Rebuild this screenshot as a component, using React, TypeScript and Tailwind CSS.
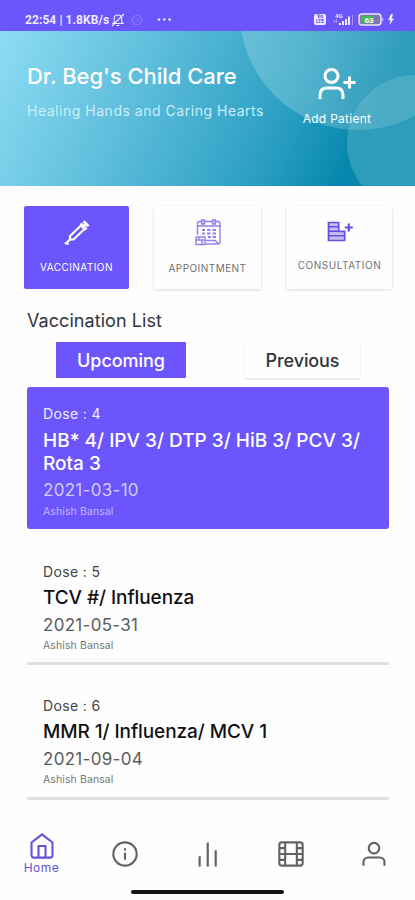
import type { ReactNode } from 'react';

const stats = [
  { label: 'VACCINATION', icon: <SyringeIcon />, card: 'w-[105px] bg-[#6c55fd] text-white rounded-xs', text: 'mt-[13px] tracking-[0.45px]' },
  { label: 'APPOINTMENT', icon: <CalendarIcon />, card: 'w-[107px] ml-[25px] text-[#707070] shadow-[0_1px_3px_rgba(0,0,0,0.14)]', text: 'mt-[14px] tracking-[0.45px]' },
  { label: 'CONSULTATION', icon: <ConsultIcon />, card: 'w-[105px] ml-[26px] text-[#707070] shadow-[0_1px_3px_rgba(0,0,0,0.14)]', text: 'mt-[11px] tracking-[0.55px]' },
];

const doses = [
  { num: 5, name: 'TCV #/ Influenza', date: '2021-05-31', doctor: 'Ashish Bansal', card: 'h-[136px] pt-[33px]' },
  { num: 6, name: 'MMR 1/ Influenza/ MCV 1', date: '2021-09-04', doctor: 'Ashish Bansal', card: 'h-[135px] pt-[31px]' },
];

function SyringeIcon() {
  return (
    <svg width="28" height="28" viewBox="0 0 28 28" fill="none" stroke="currentColor" strokeWidth="2.2">
      <path d="M2 26l5-4.500M3 24l2.500 2.500" />
      <path d="M7 18L18 7.500l3.500 3.500L10.500 21.500H7z" />
      <path d="M17.500 5.500l6 6M20.500 8.500l2.500-2.500M20.500 3.200l5 5" strokeWidth="2.800" />
    </svg>
  );
}

function CalendarIcon() {
  return (
    <svg width="28" height="28" viewBox="0 0 28 28" fill="none" stroke="#8f82ec" strokeWidth="1.400">
      <path d="M3.500 17V5.500q0-2 2-2H24q2 0 2 2V24q0 2-2 2H11M4 8h22" />
      <path d="M7.500 2h3v4h-3zM18.500 2h3v4h-3z" fill="#cbc5fa" />
      <path d="M8 12h3M13 12h3.500M18.500 12H22M8 15.500h3M13 15.500h3.500M18.500 15.500H22M14 19h3M18.500 19H22" strokeWidth="2" />
      <path d="M2 19h9v7.500H2zM2 22h9M5 19v3M8 22v4M12 22.500h9l4 3.500" />
    </svg>
  );
}

function ConsultIcon() {
  return (
    <svg width="28" height="28" viewBox="0 0 28 28" fill="none" stroke="#6350dc" strokeWidth="1.700">
      <path d="M2.500 4.500h10.200v8.800h6v9.200H2.500z" fill="#c5bdf6" />
      <path d="M3 8.800h9.500M3 13.300h10M3 17.800h15.500" strokeWidth="1.500" />
      <path d="M22.800 5.500v8M18.800 9.500h8" strokeWidth="2.200" />
    </svg>
  );
}

function Feather({ size = 28, width = 1.8, children }: { size?: number; width?: number; children: ReactNode }) {
  return (
    <svg width={size} height={size} viewBox="0 0 24 24" fill="none" stroke="currentColor" strokeWidth={width} strokeLinejoin="round">
      {children}
    </svg>
  );
}

function StatusBar() {
  return (
    <div className="h-[31px] bg-[#6c55fd] text-[#eeeaff] flex items-center pl-[25px] pr-[21px] pt-[8px]">
      <span className="font-[Roboto] text-[12px] font-bold leading-none whitespace-nowrap tracking-[0.08px]">22:54 | 1.8KB/s</span>
      <svg className="ml-[2px]" width="14" height="14" viewBox="0 0 14 14" fill="none" stroke="currentColor" strokeWidth="1.1">
        <path d="M2 10.500h10L10.800 9V5.500Q10.500 2 7 2 3.200 2 3.200 5.500V9zM5.500 12.500h3M1 13L13 1" />
      </svg>
      <svg className="ml-[6px]" width="12" height="12" viewBox="0 0 12 12" fill="none" stroke="#8a76ff" strokeWidth="1.4">
        <circle cx="6" cy="6" r="4.600" />
        <path d="M4 5h4M4 7h4" strokeWidth=".8" />
      </svg>
      <svg className="ml-[13px]" width="16" height="4" viewBox="0 0 16 4" fill="currentColor">
        <circle cx="3" cy="1.500" r="1.300" />
        <circle cx="8.300" cy="1.500" r="1.300" />
        <circle cx="13.600" cy="1.500" r="1.300" />
      </svg>
      <span className="ml-auto w-[12px] h-[11px] rounded-xs bg-[#eeeaff] text-[#6c55fd] font-[Roboto] text-[5px] font-black leading-[5px] text-center">Vo<br />LTE</span>
      <svg className="ml-[6px]" width="22" height="15" viewBox="0 0 22 15" fill="currentColor">
        <text x="3" y="5.500" fontSize="6" fontWeight="700" fontFamily="Roboto">4G</text>
        <path d="M7 11h2v2H7zM10 9h2v4h-2zM13 7h2v6h-2zM16 4.500h2V13h-2z" />
        <path d="M20 3h1v10h-1zM2 8h1v3H2zM4 7h1v4H4z" opacity=".45" />
      </svg>
      <svg className="ml-[4px]" width="27" height="13" viewBox="0 0 27 13">
        <rect x="1" y="1" width="22" height="11" rx="3" fill="#7d75b8" stroke="#eeeaff" strokeWidth="1.400" />
        <rect x="3" y="3" width="13" height="7" rx="1" fill="#47b858" />
        <path d="M24.500 4.500q2 2 0 4z" fill="#eeeaff" />
        <text x="6.500" y="9.500" fontSize="8" fontWeight="700" fontFamily="Roboto" fill="#fff">63</text>
      </svg>
      <svg className="ml-[3px]" width="6" height="11" viewBox="0 0 6 11" fill="currentColor">
        <path d="M3 0L0 6h2.300L1.500 11 6 4.500H3.700L5 0z" />
      </svg>
    </div>
  );
}

function Header() {
  return (
    <header className="relative h-[155px] overflow-hidden bg-[linear-gradient(115deg,#8edcf3_0%,#5dbddb_34%,#2b9fc3_66%,#0787ae_84%,#0787ae_100%)] text-white">
      <svg className="absolute inset-0" width="415" height="156" viewBox="0 31 415 156">
        <defs>
          <linearGradient id="glow" x1="0" y1="0" x2="1" y2="0">
            <stop offset="0" stopColor="#a5dce5" stopOpacity=".38" />
            <stop offset="1" stopColor="#a5dce5" stopOpacity=".2" />
          </linearGradient>
        </defs>
        <circle cx="358" cy="12" r="118" fill="url(#glow)" />
        <circle cx="415" cy="143" r="68" fill="#8cced9" fillOpacity=".3" />
      </svg>
      <div className="relative flex">
        <div className="pl-[27px] pt-[31px] w-[293px]">
          <h1 className="text-[22px] leading-[28px] font-medium whitespace-nowrap tracking-[-0.04px]">Dr. Beg's Child Care</h1>
          <p className="mt-[12px] text-[14px] leading-[18px] text-[#c8eff7] whitespace-nowrap tracking-[0.52px]">Healing Hands and Caring Hearts</p>
        </div>
        <div className="pt-[33px] w-[88px] flex flex-col items-center">
          <svg width="40" height="38" viewBox="0 0 40 38" fill="none" stroke="currentColor" strokeWidth="3">
            <circle cx="14.500" cy="12" r="6.500" />
            <path d="M3 35v-4q0-7 7-7h9q7 0 7 7v4M32.500 12.500v12M26.500 18.500h12" />
          </svg>
          <span className="mt-[8px] text-[12px] leading-[18px] whitespace-nowrap tracking-[0.27px]">Add Patient</span>
        </div>
      </div>
    </header>
  );
}

function BottomNav() {
  return (
    <nav className="h-[79px] border-t border-[#f8f8f8] text-[#626262]">
      <div className="grid grid-cols-5 h-[68px]">
        <div className="flex flex-col items-center pt-[10px] text-[#6553d9]">
          <Feather>
            <path d="M3 9l9-7 9 7v11a2 2 0 0 1-2 2H5a2 2 0 0 1-2-2z" />
            <path d="M9 22V12h6v10" />
          </Feather>
          <span className="mt-[1px] text-[12px] leading-[14px] tracking-[0.5px]">Home</span>
        </div>
        <div className="flex justify-center pt-[18px]">
          <Feather>
            <circle cx="12" cy="12" r="10" />
            <path d="M12 17v-6M12 9V7" />
          </Feather>
        </div>
        <div className="flex justify-center pt-[18px]">
          <Feather size={29}>
            <path d="M18.800 22V8.500M12.200 22V2M5.500 22v-8.500" />
          </Feather>
        </div>
        <div className="flex justify-center pt-[18px]">
          <Feather>
            <rect x="2" y="2" width="20" height="20" rx="2.200" />
            <path d="M7 2v20M17 2v20M2 12h20M2 7h5M2 17h5M17 17h5M17 7h5" />
          </Feather>
        </div>
        <div className="flex justify-center pt-[18px]">
          <Feather>
            <path d="M21 22v-3a4 4 0 0 0-4-4H7a4 4 0 0 0-4 4v3" />
            <circle cx="12" cy="7" r="4.500" />
          </Feather>
        </div>
      </div>
      <div className="mx-auto w-[153px] h-[4px] rounded-full bg-[#171717]" />
    </nav>
  );
}

export default function App() {
  return (
    <div className="w-[415px] h-[900px] flex flex-col overflow-hidden bg-[#fefefe] font-['Inter','Liberation_Sans',sans-serif]">
      <StatusBar />
      <Header />
      <div className="flex pl-[24px] pt-[20px] h-[103px]">
        {stats.map((s) => (
          <div key={s.label} className={`h-[83px] pt-[12px] flex flex-col items-center ${s.card}`}>
            {s.icon}
            <span className={`text-[10px] leading-[16px] whitespace-nowrap ${s.text}`}>{s.label}</span>
          </div>
        ))}
      </div>
      <main className="grow pl-[27px] pr-[26px] pt-[20px]">
        <h2 className="text-[18px] leading-[24px] text-[#30343b] tracking-[0.06px]">Vaccination List</h2>
        <div className="flex pl-[29px] mt-[9px]">
          <button className="w-[130px] h-[36px] pt-px bg-[#6c55fd] text-[18px] font-medium text-white rounded-[1px] tracking-[-0.05px]">Upcoming</button>
          <button className="w-[115px] h-[36px] pt-px ml-[59px] text-[18px] font-medium text-[#30343b] shadow-[0_1px_2px_rgba(0,0,0,0.14)] tracking-[-0.1px]">Previous</button>
        </div>
        <article className="mt-[9px] h-[142px] rounded-[3px] bg-[#6c55fd] text-white px-[16px] pt-[17px]">
          <p className="text-[14px] leading-[20px] text-[#f0edff] tracking-[0.35px]">Dose : 4</p>
          <h3 className="mt-[5px] text-[19px] leading-[23px] font-medium w-[330px]">HB* 4/ IPV 3/ DTP 3/ HiB 3/ PCV 3/ Rota 3</h3>
          <p className="mt-[4px] text-[17px] leading-[22px] text-[#d1caff] tracking-[0.3px]">2021-03-10</p>
          <p className="mt-[4px] text-[10.5px] leading-[14px] text-[#c0b6ff] tracking-[0.1px]">Ashish Bansal</p>
        </article>
        {doses.map((d) => (
          <article key={d.num} className={`border-b-[3px] border-[#dfdfdf] px-[16px] ${d.card}`}>
            <p className="text-[14px] leading-[20px] text-[#444] tracking-[0.35px]">Dose : {d.num}</p>
            <h3 className="mt-[4px] text-[19px] leading-[23px] font-medium text-[#111] tracking-[-0.08px]">{d.name}</h3>
            <p className="mt-[4px] text-[17px] leading-[24px] text-[#5c5c5c] tracking-[0.3px]">{d.date}</p>
            <p className="mt-[2px] text-[10.5px] leading-[14px] text-[#777] tracking-[0.1px]">{d.doctor}</p>
          </article>
        ))}
      </main>
      <BottomNav />
    </div>
  );
}
